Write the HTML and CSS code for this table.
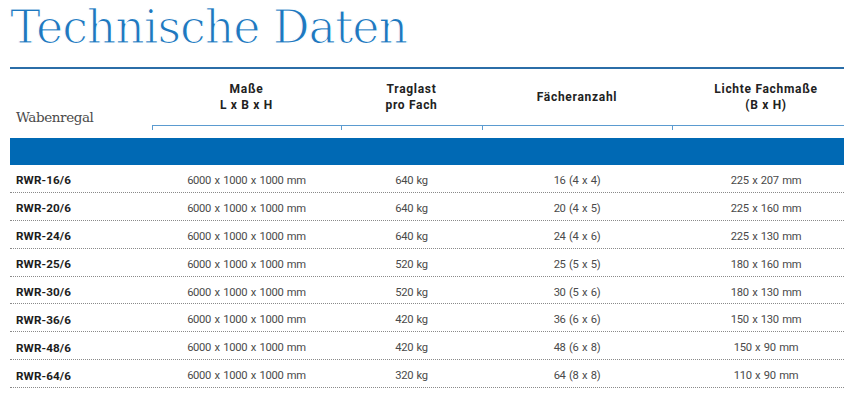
FILE: index.html
```html
<!DOCTYPE html>
<html lang="de">
<head>
<meta charset="utf-8">
<title>Technische Daten</title>
<link rel="stylesheet" href="styles.css">
</head>
<body>
<div class="page">
  <h1 class="title">Technische Daten</h1>
  <div class="sheet">
    <div class="specs">
      <div class="head">
        <div class="cell lead">Wabenregal</div>
        <div class="cell col">Maße<br>L x B x H</div>
        <div class="cell col">Traglast<br>pro Fach</div>
        <div class="cell col">Fächeranzahl</div>
        <div class="cell col">Lichte Fachmaße<br>(B x H)</div>
      </div>
      <div class="bar"></div>
      <div class="row"><div class="name">RWR-16/6</div><div>6000 x 1000 x 1000 mm</div><div>640 kg</div><div>16 (4 x 4)</div><div>225 x 207 mm</div></div>
      <div class="row"><div class="name">RWR-20/6</div><div>6000 x 1000 x 1000 mm</div><div>640 kg</div><div>20 (4 x 5)</div><div>225 x 160 mm</div></div>
      <div class="row"><div class="name">RWR-24/6</div><div>6000 x 1000 x 1000 mm</div><div>640 kg</div><div>24 (4 x 6)</div><div>225 x 130 mm</div></div>
      <div class="row"><div class="name">RWR-25/6</div><div>6000 x 1000 x 1000 mm</div><div>520 kg</div><div>25 (5 x 5)</div><div>180 x 160 mm</div></div>
      <div class="row"><div class="name">RWR-30/6</div><div>6000 x 1000 x 1000 mm</div><div>520 kg</div><div>30 (5 x 6)</div><div>180 x 130 mm</div></div>
      <div class="row"><div class="name">RWR-36/6</div><div>6000 x 1000 x 1000 mm</div><div>420 kg</div><div>36 (6 x 6)</div><div>150 x 130 mm</div></div>
      <div class="row"><div class="name">RWR-48/6</div><div>6000 x 1000 x 1000 mm</div><div>420 kg</div><div>48 (6 x 8)</div><div>150 x 90 mm</div></div>
      <div class="row"><div class="name">RWR-64/6</div><div>6000 x 1000 x 1000 mm</div><div>320 kg</div><div>64 (8 x 8)</div><div>110 x 90 mm</div></div>
    </div>
  </div>
</div>
</body>
</html>
```
FILE: styles.css
```css
html, body {
  margin: 0;
  padding: 0;
  background: #fff;
}
.page {
  width: 844px;
  height: 401px;
  overflow: hidden;
}
.title {
  margin: 0;
  padding: 1px 0 0 10px;
  font-family: "DejaVu Serif", serif;
  font-weight: normal;
  font-size: 46px;
  line-height: 52px;
  letter-spacing: -1.1px;
  color: #1f78bf;
  -webkit-text-stroke: 1.2px #fff;
}
.sheet {
  margin-top: 14px;
  padding-left: 10px;
  overflow: hidden;
}
.specs {
  width: 850px;
  border-top: 2px solid #2b6ea8;
  font-family: Roboto, "Liberation Sans", sans-serif;
}
.head {
  display: grid;
  grid-template-columns: 142px 189px 141px 190px 188px;
  height: 57px;
}
.cell {
  box-sizing: border-box;
  display: flex;
}
.lead {
  align-items: flex-end;
  padding: 0 0 2px 6px;
  font-family: "DejaVu Serif", serif;
  font-size: 13.5px;
  line-height: 14px;
  letter-spacing: -0.4px;
  color: #4a4a4a;
}
.col {
  position: relative;
  align-items: center;
  justify-content: center;
  text-align: center;
  border-bottom: 1px solid #5b9bd0;
  font-weight: bold;
  font-size: 12px;
  line-height: 16.5px;
  letter-spacing: 0.7px;
  color: #222;
}
.col::before {
  content: "";
  position: absolute;
  left: 0;
  bottom: -5px;
  width: 1px;
  height: 5px;
  background: #5b9bd0;
}
.bar {
  margin-top: 12px;
  height: 27px;
  background: #0069b4;
}
.row {
  display: grid;
  grid-template-columns: 142px 189px 141px 190px 188px;
  box-sizing: border-box;
  height: 27.9px;
  padding-top: 4px;
  align-items: center;
  border-bottom: 1px dotted #8a8a8a;
  font-size: 11.2px;
  letter-spacing: -0.3px;
  word-spacing: 1px;
  color: #4a4a4a;
  text-align: center;
}
.row .name {
  text-align: left;
  padding-left: 6px;
  font-weight: bold;
  font-size: 11.7px;
  letter-spacing: 0.1px;
  word-spacing: 0;
  color: #1c1c1c;
}
```
